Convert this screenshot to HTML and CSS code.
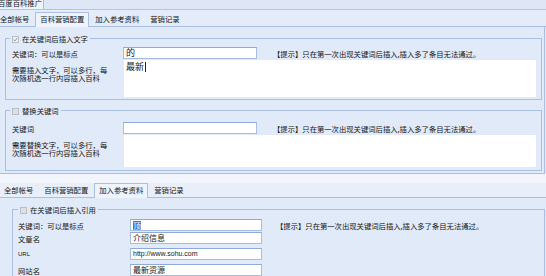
FILE: index.html
```html
<!DOCTYPE html>
<html lang="zh-CN">
    <head>
        <meta charset="UTF-8">
        <title>百度百科推广</title>
        <link rel="stylesheet" href="styles.css">
    </head>
    <body>

    <div class="window window-config">
        <div class="titlebar">
            <div class="title-tab"><span class="title-text">百度百科推广</span></div>
        </div>
        <div class="tabs">
            <span class="tab">全部帐号</span>
            <span class="tab tab-on">百科营销配置</span>
            <span class="tab">加入参考资料</span>
            <span class="tab">营销记录</span>
        </div>
        <div class="panel">
            <fieldset class="group">
                <legend><span class="check check-on"><svg viewBox="0 0 7 7" width="5" height="5"><polyline points="0.8,3.6 2.7,5.5 6.2,1.2" fill="none" stroke="#8d8d8d" stroke-width="1.3"/></svg></span>在关键词后插入文字</legend>
                <div class="row">
                    <span class="lbl">关键词：可以是标点</span>
                    <div class="field field-big">的</div>
                    <span class="hint">【提示】只在第一次出现关键词后插入,插入多了条目无法通过。</span>
                </div>
                <div class="row row-text">
                    <span class="lbl lbl-multi">需要插入文字，可以多行，每次随机选一行内容插入百科</span>
                    <div class="textbox">最新<span class="caret"></span></div>
                </div>
            </fieldset>

            <fieldset class="group group-replace">
                <legend><span class="check"></span>替换关键词</legend>
                <div class="row">
                    <span class="lbl">关键词</span>
                    <div class="field"></div>
                    <span class="hint">【提示】只在第一次出现关键词后插入,插入多了条目无法通过。</span>
                </div>
                <div class="row row-text">
                    <span class="lbl lbl-multi">需要替换文字，可以多行，每次随机选一行内容插入百科</span>
                    <div class="textbox textbox-short"></div>
                </div>
            </fieldset>
        </div>
    </div>

    <div class="gap"></div>

    <div class="window window-refs">
        <div class="tabs">
            <span class="tab">全部帐号</span>
            <span class="tab">百科营销配置</span>
            <span class="tab tab-on">加入参考资料</span>
            <span class="tab">营销记录</span>
        </div>
        <div class="panel">
            <fieldset class="group">
                <legend><span class="check"></span>在关键词后插入引用</legend>
                <div class="row">
                    <span class="lbl">关键词：可以是标点</span>
                    <div class="field"><span class="sel">顶</span></div>
                    <span class="hint">【提示】只在第一次出现关键词后插入,插入多了条目无法通过。</span>
                </div>
                <div class="row row-near">
                    <span class="lbl">文章名</span>
                    <div class="field">介绍信息</div>
                </div>
                <div class="row">
                    <span class="lbl lbl-latin">URL</span>
                    <div class="field field-latin">http://www.sohu.com</div>
                </div>
                <div class="row">
                    <span class="lbl">网站名</span>
                    <div class="field">最新资源</div>
                </div>
            </fieldset>
        </div>
    </div>

    </body>
</html>
```

FILE: styles.css
```css
* {
    box-sizing: border-box;
    margin: 0;
    padding: 0;
}
body {
    width: 546px;
    height: 276px;
    overflow: hidden;
    background-color: #e1eaf8;
    font-family: "Noto Sans CJK SC", "Noto Sans", sans-serif;
    font-size: 7.33px;
    color: #161616;
}

/* title strip, only its lower part is in the picture */
.titlebar {
    display: flex;
    height: 10px;
    background-color: #dde7f6;
    border-bottom: 1px solid #b1c5e9;
    overflow: hidden;
}
.title-tab {
    width: 44px;
    background-color: #eef3fb;
    border-right: 1px solid #a9bfe6;
    overflow: hidden;
    white-space: nowrap;
}
.title-text {
    display: block;
    margin-top: -2px;
    margin-left: -2px;
    line-height: 10px;
}

/* tab strip */
.tabs {
    display: flex;
    align-items: flex-end;
    gap: 1px;
    background-color: #e4ecf9;
    border-bottom: 1px solid #a9bfe6;
}
.tab {
    height: 14px;
    line-height: 12px;
    padding: 0 4px;
    border: 1px solid transparent;
    border-bottom-width: 0;
    white-space: nowrap;
}
.tab-on {
    height: 15px;
    margin-bottom: -1px;
    background-color: #eef3fc;
    border-color: #a9bfe6;
}
.window-config .tabs {
    height: 17px;
    margin-left: -5px;
}
.window-refs .tabs {
    height: 15px;
    margin-left: -1px;
    background-color: #e8eff9;
}

.panel {
    background-color: #e1eaf8;
}
.window-config .panel {
    width: 545px;
    padding: 7px 2px 2px 5px;
    border-right: 1px solid #a9bfe6;
    border-bottom: 1px solid #a9bfe6;
}
.window-refs .panel {
    padding: 7px 1px 0 12px;
}

.gap {
    height: 9px;
    background-color: #f2f6fc;
}

/* groups */
.group {
    min-width: 0;
    border: 1px solid #a9bfe6;
    padding: 4px 5px 2px 6px;
}
.group legend {
    height: 9px;
    line-height: 9px;
    margin-left: -2px;
    padding: 0 2px;
    white-space: nowrap;
}
.group-replace {
    margin-top: 6px;
    padding-top: 7px;
    padding-bottom: 3px;
}
.window-refs .group {
    padding: 5px 1px 6px 5px;
}
.window-refs .group legend {
    margin-left: 0;
}
.check {
    display: inline-block;
    width: 7px;
    height: 7px;
    margin-right: 3px;
    vertical-align: -1px;
    border: 1px solid #b9bfc8;
    background-color: #dcdfe4;
}
.check-on {
    background-color: #eef1f5;
}
.check svg {
    display: block;
}

/* rows */
.row {
    display: grid;
    grid-template-columns: 111px 150px 1fr;
    align-items: center;
    height: 12px;
}
.row-text {
    grid-template-columns: 112px 1fr;
    align-items: start;
    height: auto;
    margin-top: 1px;
}
.window-refs .row {
    grid-template-columns: 112px 146px 1fr;
    margin-top: 4px;
}
.window-refs .row:first-of-type {
    margin-top: 0;
}
.window-refs .row-near {
    margin-top: 1px;
}
.lbl {
    white-space: nowrap;
    line-height: 9px;
}
.lbl-multi {
    width: 98px;
    padding-top: 6px;
    line-height: 8px;
    white-space: normal;
}
.lbl-latin {
    font-family: "Liberation Sans", sans-serif;
    font-size: 6px;
}
.hint {
    white-space: nowrap;
    line-height: 9px;
}

.field {
    width: 134px;
    height: 12px;
    padding: 0 2px;
    border: 1px solid #a7bde4;
    border-top-color: #8ea9da;
    background-color: #fff;
    font-size: 8px;
    line-height: 10px;
    white-space: nowrap;
    overflow: hidden;
}
.field-big {
    font-size: 9px;
}
.window-refs .field {
    width: 132px;
}
.field-latin {
    font-family: "Liberation Sans", sans-serif;
    font-size: 7px;
}
.sel {
    display: inline-block;
    background-color: #3a78d8;
    color: #fff;
    line-height: 9px;
    margin-top: 1px;
}

.textbox {
    height: 37px;
    padding: 1px 2px;
    background-color: #fff;
    font-size: 9px;
    line-height: 11px;
}
.textbox-short {
    height: 32px;
}
.caret {
    display: inline-block;
    width: 1px;
    height: 10px;
    margin-left: 1px;
    vertical-align: -2px;
    background-color: #222;
}
```
